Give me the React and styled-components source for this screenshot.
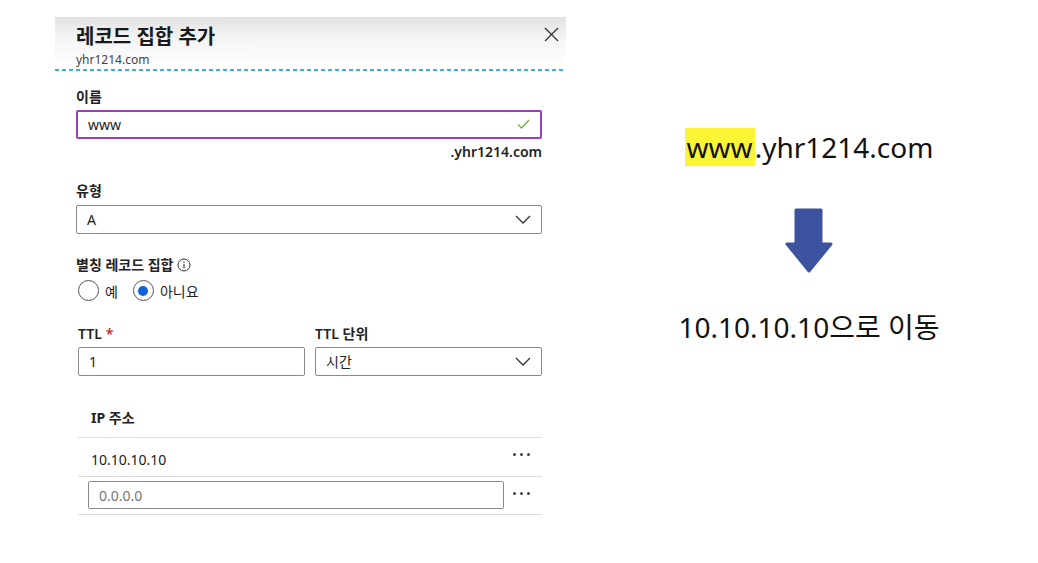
import React from "react";
import styled, { createGlobalStyle } from "styled-components";

const Global = createGlobalStyle`
  body {
    margin: 0;
    background: #fff;
    font-family: "Noto Sans", "Noto Sans CJK KR", sans-serif;
    color: #222;
  }
`;

const Page = styled.div`
  display: flex;
  width: 1038px;
  height: 563px;
  overflow: hidden;
`;

const Panel = styled.div`
  margin: 17px 0 0 55px;
  width: 511px;
`;

const Header = styled.div`
  position: relative;
  height: 52px;
  padding-left: 21px;
  background: linear-gradient(#e2e2e2 0%, #f4f4f4 40%, #fff 100%);
  box-sizing: border-box;
`;

const Dashed = styled.div`
  height: 1.5px;
  background: repeating-linear-gradient(90deg, #2bb6ea 0 4px, transparent 4px 7px);
`;

const Title = styled.div`
  padding-top: 6px;
  font-size: 20px;
  font-weight: 700;
  line-height: 28px;
  color: #1a1a1a;
`;

const Sub = styled.div`
  margin-top: 2px;
  font-size: 12px;
  line-height: 14px;
  color: #444;
`;

const Close = styled.svg`
  position: absolute;
  right: 7px;
  top: 10px;
`;

const Body = styled.div`
  padding: 0 24px 0 21px;
`;

const Label = styled.div`
  margin-top: ${(p) => p.$top || 0}px;
  font-size: 14px;
  font-weight: 600;
  line-height: 18px;
  color: #222;
  display: flex;
  align-items: center;
  gap: 4px;
`;

const Star = styled.span`
  color: #c4262e;
`;

const Field = styled.div`
  position: relative;
  margin-top: ${(p) => p.$top || 0}px;
  height: 29px;
  box-sizing: border-box;
  border: ${(p) => (p.$focus ? "2px solid #9b3fc4" : "1px solid #8a8a8a")};
  border-radius: 2px;
  display: flex;
  align-items: center;
  justify-content: space-between;
  padding: 0 10px;
  font-size: 14px;
  color: #222;
`;

const Suffix = styled.div`
  margin-top: 4px;
  text-align: right;
  font-size: 14px;
  font-weight: 600;
  line-height: 18px;
`;

const Radios = styled.div`
  margin: 6px 0 0 2px;
  display: flex;
  gap: 15px;
  height: 22px;
  align-items: center;
`;

const Radio = styled.label`
  display: flex;
  align-items: center;
  gap: 6px;
  font-size: 14px;
`;

const Circle = styled.span`
  width: 21px;
  height: 21px;
  border: 1px solid #555;
  border-radius: 50%;
  box-sizing: border-box;
  display: flex;
  align-items: center;
  justify-content: center;
  &::after {
    content: "";
    width: 10px;
    height: 10px;
    border-radius: 50%;
    background: ${(p) => (p.$on ? "#0f62d8" : "transparent")};
  }
`;

const Grid = styled.div`
  margin: ${(p) => p.$top || 0}px 0 0 2px;
  display: grid;
  grid-template-columns: 227px 227px;
  column-gap: 10px;
  row-gap: 4px;
  align-items: end;
`;

const Table = styled.div`
  margin: 33px 0 0 2px;
`;

const TableHead = styled.div`
  padding: 0 0 10px 13px;
  font-size: 14px;
  font-weight: 700;
  line-height: 18px;
  border-bottom: 1px solid #e2e2e2;
`;

const Row = styled.div`
  height: ${(p) => p.$h}px;
  box-sizing: border-box;
  display: flex;
  align-items: center;
  justify-content: space-between;
  padding: ${(p) => p.$top || 0}px 12px 0 ${(p) => p.$pad}px;
  border-bottom: 1px solid #dcdcdc;
  font-size: 14px;
`;

const Dots = styled.span`
  display: flex;
  gap: 4px;
  margin-top: ${(p) => p.$up || 0}px;
  span {
    width: 3px;
    height: 3px;
    border-radius: 50%;
    background: #444;
  }
`;

const IpInput = styled.div`
  width: 416px;
  height: 28px;
  box-sizing: border-box;
  border: 1px solid #8a8a8a;
  border-radius: 2px;
  padding: 0 10px;
  display: flex;
  align-items: center;
  color: #777;
  font-size: 14px;
`;

const Side = styled.div`
  margin-left: 54px;
  width: 378px;
  padding-top: 127px;
  display: flex;
  flex-direction: column;
  align-items: center;
`;

const Big = styled.div`
  font-size: 28px;
  line-height: 40px;
  color: #111;
`;

const Mark = styled.span`
  background: #fcf535;
  padding: 0 2px;
`;

const Arrow = styled.svg`
  margin: 41px 0 34px;
`;

const Chevron = () => (
  <svg width="16" height="9" viewBox="0 0 16 9">
    <path d="M1 1l7 7 7-7" fill="none" stroke="#333" strokeWidth="1.3" />
  </svg>
);

const DotsIcon = ({ up }) => (
  <Dots $up={up}>
    <span />
    <span />
    <span />
  </Dots>
);

export default function App() {
  return (
    <Page>
      <Global />
      <Panel>
        <Header>
          <Title>레코드 집합 추가</Title>
          <Sub>yhr1214.com</Sub>
          <Close width="15" height="15" viewBox="0 0 15 15">
            <path d="M1 1l13 13M14 1L1 14" stroke="#333" strokeWidth="1.3" />
          </Close>
        </Header>
        <Dashed />
        <Body>
          <Label $top={17}>이름</Label>
          <Field $focus $top={4}>
            <span>www</span>
            <svg width="13" height="10" viewBox="0 0 13 10">
              <path d="M1 5.5l3.5 3.5L12 1" fill="none" stroke="#6bb33a" strokeWidth="1.3" />
            </svg>
          </Field>
          <Suffix>.yhr1214.com</Suffix>
          <Label $top={21}>유형</Label>
          <Field $top={5}>
            <span>A</span>
            <Chevron />
          </Field>
          <Label $top={22}>
            별칭 레코드 집합
            <svg width="14" height="14" viewBox="0 0 14 14">
              <circle cx="7" cy="7" r="6" fill="none" stroke="#333" strokeWidth="1" />
              <circle cx="7" cy="4.2" r="0.8" fill="#333" />
              <path d="M7 6v4.5" stroke="#333" strokeWidth="1.1" />
            </svg>
          </Label>
          <Radios>
            <Radio>
              <Circle />예
            </Radio>
            <Radio>
              <Circle $on />아니요
            </Radio>
          </Radios>
          <Grid $top={23}>
            <Label>
              TTL <Star>*</Star>
            </Label>
            <Label>TTL 단위</Label>
            <Field>
              <span>1</span>
            </Field>
            <Field>
              <span>시간</span>
              <Chevron />
            </Field>
          </Grid>
          <Table>
            <TableHead>IP 주소</TableHead>
            <Row $pad={13} $h={39} $top={6}>
              <span>10.10.10.10</span>
              <DotsIcon up={-10} />
            </Row>
            <Row $pad={10} $h={38}>
              <IpInput>0.0.0.0</IpInput>
              <DotsIcon up={-3} />
            </Row>
          </Table>
        </Body>
      </Panel>
      <Side>
        <Big>
          <Mark>www</Mark>.yhr1214.com
        </Big>
        <Arrow width="48" height="65" viewBox="0 0 48 65">
          <path
            d="M11 2h25v34h10L24 63 2 36h9z"
            fill="#3e53a0"
            stroke="#3e53a0"
            strokeWidth="3"
            strokeLinejoin="round"
          />
        </Arrow>
        <Big>10.10.10.10으로 이동</Big>
      </Side>
    </Page>
  );
}
